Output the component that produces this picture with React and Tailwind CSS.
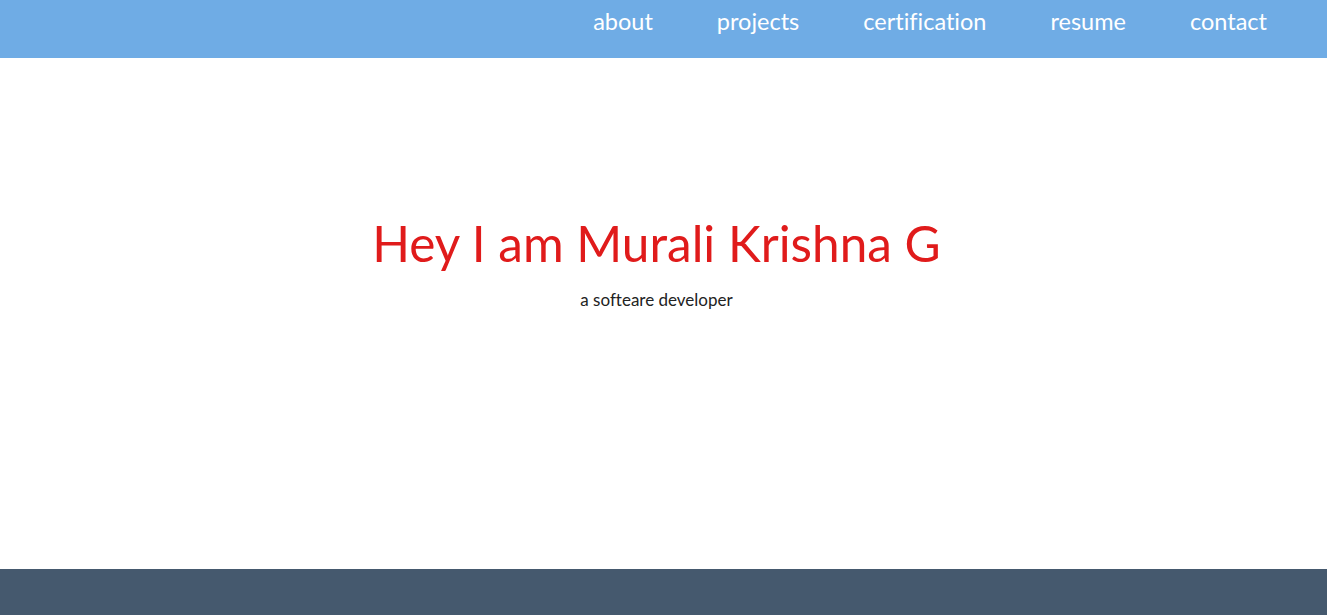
const links = ['about', 'projects', 'certification', 'resume', 'contact'];

const App = () => {
  return (
    <div className="min-h-screen flex flex-col bg-white font-['Lato','Noto_Sans',sans-serif] [font-variant-ligatures:none]">
      <nav className="h-[58px] bg-[#6facE5] flex items-start justify-end pr-[60px] pt-[6px]">
        <ul className="flex gap-[64px]">
          {links.map((l) => (
            <li key={l}>
              <a href="#" className="text-[23.5px] text-white leading-[30px]">{l}</a>
            </li>
          ))}
        </ul>
      </nav>

      <main className="h-[511px] flex flex-col items-center pt-[155px] pr-[14px]">
        <h1 className="text-[49.5px] leading-[60px] text-[#e01b1b]">Hey I am Murali Krishna G</h1>
        <p className="mt-[14px] text-[17px] text-[#222]">a softeare developer</p>
      </main>

      <footer className="h-[46px] bg-[#45596e]" />
    </div>
  );
};

export default App;
